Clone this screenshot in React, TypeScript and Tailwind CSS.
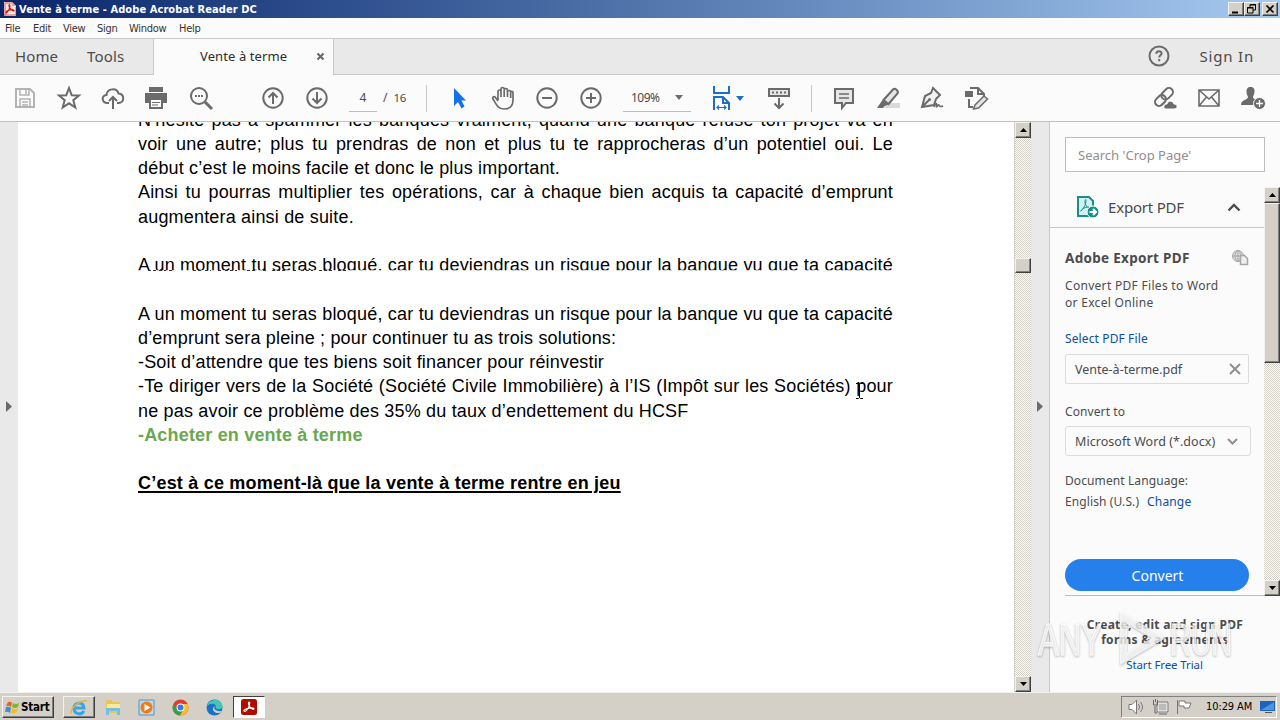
import type { ReactNode } from 'react';
import clsx from 'clsx';

const menus = [
  { label: 'File', width: 'w-[28px]' },
  { label: 'Edit', width: 'w-[30px]' },
  { label: 'View', width: 'w-[34px]' },
  { label: 'Sign', width: 'w-[32px]' },
  { label: 'Window', width: 'w-[50px]' },
  { label: 'Help', width: 'w-[30px]' },
];

type Line = { text: string; justify?: boolean; style?: string };

const lines: Line[] = [
  { text: 'N’hésite pas à spammer les banques vraiment, quand une banque refuse ton projet va en', justify: true },
  { text: 'voir une autre; plus tu prendras de non et plus tu te rapprocheras d’un potentiel oui. Le', justify: true },
  { text: 'début c’est le moins facile et donc le plus important.' },
  { text: 'Ainsi tu pourras multiplier tes opérations, car à chaque bien acquis ta capacité d’emprunt', justify: true },
  { text: 'augmentera ainsi de suite.' },
  { text: '' },
  { text: 'A un moment tu seras bloqué, car tu deviendras un risque pour la banque vu que ta capacité', justify: true, style: '[clip-path:inset(0_0_7px_0)]' },
  { text: '' },
  { text: 'A un moment tu seras bloqué, car tu deviendras un risque pour la banque vu que ta capacité', justify: true },
  { text: 'd’emprunt sera pleine ; pour continuer tu as trois solutions:' },
  { text: '-Soit d’attendre que tes biens soit financer pour réinvestir' },
  { text: '-Te diriger vers de la Société (Société Civile Immobilière) à l’IS (Impôt sur les Sociétés) pour', justify: true },
  { text: 'ne pas avoir ce problème des 35% du taux d’endettement du HCSF' },
  { text: '-Acheter en vente à terme', style: 'font-bold text-[#6aa84f]' },
  { text: '' },
  { text: 'C’est à ce moment-là que la vente à terme rentre en jeu', style: 'font-bold underline decoration-2 underline-offset-2 tracking-[0.21px]' },
];

const raised = 'border border-t-[#f4f2ee] border-l-[#f4f2ee] border-r-[#404040] border-b-[#404040] bg-[#d4d0c8] shadow-[inset_-1px_-1px_0_#808080]';
const dither = 'bg-[repeating-conic-gradient(#d4d0c8_0_25%,#ffffff_0_50%)] bg-[length:2px_2px]';

function Cell({ children, className }: { children: ReactNode; className?: string }) {
  return (
    <button className={clsx('flex h-full shrink-0 items-center justify-center', className ?? 'w-11')}>
      <svg width="26" height="26" viewBox="0 0 26 26" fill="none" stroke="#6b6b6b" strokeWidth="2">{children}</svg>
    </button>
  );
}

function AcrobatMark({ size }: { size: number }) {
  return (
    <svg width={size} height={size} viewBox="0 0 16 16">
      <rect width="16" height="16" rx="2.5" fill="#b30b00" />
      <path d="M3 12.2c-.9-1 1.8-2.6 5.2-3.1 3-.5 5-.1 4.8.8-.3 1.1-3.4-.6-4.8-3C7.300 5.200 7.200 3 8.100 3c1 0 .7 2.400-.4 5.100C6.500 10.900 4 13.300 3 12.200z" fill="none" stroke="#fff" strokeWidth="1.1" />
    </svg>
  );
}

function Arrow({ down }: { down?: boolean }) {
  return (
    <div className={clsx('flex h-4 w-full shrink-0 items-center justify-center', raised)}>
      <svg width="7" height="4" viewBox="0 0 7 4">
        <path d={down ? 'M0 0h7L3.500 4z' : 'M0 4h7L3.500 0z'} fill="#000" />
      </svg>
    </div>
  );
}

function TitleBar() {
  return (
    <div className="flex h-[18px] shrink-0 items-center bg-linear-to-r from-[#0a246a] to-[#a6caf0] pl-1 pr-0.5">
      <svg width="12" height="14" viewBox="0 0 12 14">
        <path d="M0 0h8l4 4v10H0z" fill="#f7e9e7" />
        <path d="M1 14V1h7M0 13h12V5" fill="none" stroke="#e0554d" strokeWidth="1" />
        <path d="M8 0v4h4" fill="#e5a29d" />
        <path d="M2 10c1-2 7-3 8-1.500S5 7 5 4s2 0 0 3.500S1.500 11.500 2 10z" fill="none" stroke="#d7190f" strokeWidth="1.300" />
      </svg>
      <span className="ml-[3px] whitespace-nowrap font-['DejaVu_Sans_Condensed','DejaVu_Sans',sans-serif] text-[11px] font-bold leading-none tracking-[0.08px] text-white">
        Vente à terme - Adobe Acrobat Reader DC
      </span>
      <div className="ml-auto flex">
        <div className={clsx('h-[14px] w-4', raised)}>
          <svg width="14" height="12"><path d="M3 9.500h6" stroke="#000" strokeWidth="2" /></svg>
        </div>
        <div className={clsx('h-[14px] w-4', raised)}>
          <svg width="14" height="12" fill="none" stroke="#000"><path d="M5 4V1.500h5.500V7H8M5 2h6M2.500 4.500H8V10H2.500zM2 5h6" /></svg>
        </div>
        <div className={clsx('ml-0.5 h-[14px] w-4', raised)}>
          <svg width="14" height="12"><path d="M3.500 2.500l7 7m0-7l-7 7" stroke="#000" strokeWidth="1.700" /></svg>
        </div>
      </div>
    </div>
  );
}

function Tabs() {
  return (
    <div className="flex h-[37px] shrink-0 border-t border-[#c8c8c8] bg-[#e9e9e9] text-[#4b4b4b]">
      <div className="flex w-[154px] items-center border-r border-b border-[#c8c8c8] pl-[15px] text-[15px]">
        <span className="w-[72px] tracking-[0.1px]">Home</span>
        <span className="tracking-[0.2px]">Tools</span>
      </div>
      <div className="flex w-[179px] items-center bg-[#fbfbfb] pl-[46px] text-[13px] text-[#2d2d2d]">
        <span className="w-[116px] whitespace-nowrap tracking-[0.1px]">Vente à terme</span>
        <svg className="mb-px" width="9" height="9" viewBox="0 0 9 9"><path d="M1.500 1.500l6 6m0-6l-6 6" stroke="#666" strokeWidth="2" /></svg>
      </div>
      <div className="flex flex-1 items-center justify-end border-b border-l border-[#c8c8c8] pr-[26px] pb-px">
        <svg className="mr-[30px]" width="22" height="22" viewBox="0 0 22 22" fill="none" stroke="#6b6b6b" strokeWidth="2">
          <circle cx="11" cy="11" r="9.500" />
          <path d="M8.300 8.700c0-3.400 5.500-3.200 5.300-.3-.1 1.800-2.400 1.900-2.400 4M11.200 14v2.200" />
        </svg>
        <span className="text-[15px] tracking-[0.8px]">Sign In</span>
      </div>
    </div>
  );
}

function Toolbar() {
  return (
    <div className="flex h-[47px] shrink-0 items-center border-b border-[#c0c0c0] bg-[#fbfbfb] pl-[3px] pr-[5px] text-[12px] text-[#4b4b4b]">
      <Cell>
        <g stroke="#b3b3b3"><path d="M4 4h14l4 4v14H4z" /><path d="M8 4v6h9V4M14 5v4M8 22v-8h10v8M10 17h6m-6 3h6" strokeWidth="1.500" /></g>
      </Cell>
      <Cell><path d="M13 3l2.700 7.200 7.300.3-5.700 4.700 2 7.300L13 18.300l-6.300 4.200 2-7.300L3 10.500l7.300-.3z" /></Cell>
      <Cell><path d="M9 18H7.500C1.500 18 1 10.500 6.500 10c.5-7 10.500-7.500 12-1.500 6.500.5 6 9.500 0 9.500H17M13 24V12m-4 4l4-4 4 4" /></Cell>
      <Cell>
        <path d="M5 2h14v5H5z" fill="#6b6b6b" stroke="none" />
        <path d="M1 8h22v10h-4v-4H5v4H1z" fill="#6b6b6b" stroke="none" />
        <path d="M6 14h12v9H6z" fill="#fbfbfb" /><path d="M8 17.500h8m-8 2.500h6" strokeWidth="1" /><path d="M4 7.500h16" stroke="#fbfbfb" strokeWidth="1" />
      </Cell>
      <Cell><circle cx="11" cy="11" r="8" /><path d="M17 17l7 7" strokeWidth="3" /><path d="M7 11h2m1 0h2m1 0h2" /></Cell>
      <div className="w-7" />
      <Cell><circle cx="13" cy="13" r="9.700" /><path d="M13 19V8m-4.500 4.500L13 8l4.500 4.500" /></Cell>
      <Cell><circle cx="13" cy="13" r="9.700" /><path d="M13 7v11m-4.500-4.500L13 18l4.500-4.500" /></Cell>
      <div className="ml-2.5 flex h-[27px] w-7 items-center justify-center border-b border-[#bdbdbd]">4</div>
      <span className="ml-[6px] w-[43px] whitespace-nowrap">/ <span className="ml-[3px] text-[11.500px] tracking-[-0.4px]">16</span></span>
      <div className="h-[27px] w-px bg-[#c8c8c8]" />
      <div className="w-[10px]" />
      <Cell><path d="M8 3v18l4-4 3.500 6.500 3-2-3-6H20z" fill="#1473e6" stroke="none" /></Cell>
      <Cell>
        <path d="M8 15V6.500c0-2 3-2 3 0V12m0-6V4c0-2 3.200-2 3.200 0v8m0-7c0-2 3.300-2 3.300 0v7m0-5c0-2 3.200-2 3.200 0v0M8 16l-2.500-3.500c-1.300-1.700-3.500-.2-2.500 1.500C6 19 8 24 14 24c6.500 0 9-3.500 9-9V7.500c0-1.500-2.300-1.500-2.300 0V13" strokeWidth="1.700" />
      </Cell>
      <Cell><circle cx="13" cy="13" r="9.700" /><path d="M8 13h10" /></Cell>
      <Cell><circle cx="13" cy="13" r="9.700" /><path d="M8 13h10M13 8v10" /></Cell>
      <div className="ml-[10px] flex h-[27px] w-[68px] shrink-0 items-center justify-between border-b border-[#bdbdbd] px-2">
        <span className="tracking-[-0.5px]">109%</span>
        <svg width="8" height="5"><path d="M0 0h8L4 5z" fill="#6b6b6b" /></svg>
      </div>
      <Cell className="ml-[19px] w-[26px]">
        <path d="M4 1v7h15V1M4 25V12h9l6 6v7M13 12v6h6" stroke="#1b6fc4" />
        <path d="M7 22.500h9m-7-2l-2 2 2 2m5-4l2 2-2 2" stroke="#1b6fc4" strokeWidth="1.200" />
      </Cell>
      <svg width="8" height="5" className="shrink-0"><path d="M0 0h8L4 5z" fill="#1b6fc4" /></svg>
      <Cell className="ml-[13px] w-11">
        <path d="M3 4h20v7H3z" fill="#e6e6e6" /><path d="M13 13v10m-4.500-4.500L13 23l4.500-4.500" /><path d="M6 7.500h14" strokeDasharray="2 2" />
      </Cell>
      <div className="ml-[10px] h-[27px] w-px bg-[#c8c8c8]" />
      <div className="w-[10px]" />
      <Cell><path d="M4 4h18v14h-7l-4 5v-5H4z" fill="#e6e6e6" /><path d="M8 9h10m-10 4h10" strokeWidth="1.500" /></Cell>
      <Cell>
        <path d="M11 18h14v5H9z" fill="#d9d9d9" stroke="none" />
        <path d="M8.500 15L18 4.500c2-2 6 1.500 4.500 4L13.500 19z" fill="#e6e6e6" /><path d="M7.500 15l6 4.500-4 1.500L8 23H2z" fill="#6b6b6b" stroke="none" />
      </Cell>
      <Cell>
        <path d="M14 3l7 7-4 4-2 6L3 22l3-11 6-3zM3.500 21.500L10 15" fill="#f1f1f1" /><circle cx="10.500" cy="14.500" r="1.500" fill="#6b6b6b" stroke="none" />
        <path d="M15 22c2-5 3-4 2.500-1s2-2.500 2.500-1 1.500 2 4 1" strokeWidth="1.600" />
      </Cell>
      <Cell>
        <path d="M7 3h8l6 6v3M15 3v6h6M6 14v8h4" /><path d="M2 6h8v6H2z" fill="#6b6b6b" stroke="none" /><path d="M12 20l9-9 3.500 3-9 9-5 1z" fill="#e6e6e6" strokeWidth="1.500" />
      </Cell>
      <div className="flex-1" />
      <Cell>
        <g transform="translate(1 0) rotate(-45 11 12)"><rect x="0" y="8" width="12" height="8" rx="4" /><rect x="9" y="8" width="13" height="8" rx="4" /></g>
        <path d="M14 24c-3 0-3-5 1-5 1-4 6-3.500 7 0 4 0 4 5 0 5z" fill="#6b6b6b" stroke="#fbfbfb" strokeWidth="1" />
      </Cell>
      <Cell><path d="M3 5h20v16H3zM3 5l10 9L23 5M3 21l7.500-9M23 21l-7.500-9" strokeWidth="1.600" /></Cell>
      <Cell>
        <path d="M10.500 2c3 0 4.500 2 4 5-.2 3-1.500 3.500-1.500 5.500 0 1.500 5 2 6 5L16 20H1c0-5 6-5 7-7.500 0-2-1.500-2.500-1.500-5.500 0-3 1-5 4-5z" fill="#6b6b6b" stroke="none" />
        <circle cx="19.500" cy="18.500" r="6" fill="#6b6b6b" stroke="#fbfbfb" strokeWidth="1" /><path d="M16 18.500h7M19.500 15v7" stroke="#fff" strokeWidth="1.300" />
      </Cell>
    </div>
  );
}

function Document() {
  return (
    <div className="relative min-w-0 flex-1 overflow-hidden bg-white pl-[120px]">
      <div className="-mt-[14.500px] w-[755px] font-['Liberation_Sans',Arial,sans-serif] text-[18px] leading-[24.270px] tracking-[0.18px] text-black">
        {lines.map((line, i) => (
          <p key={i} className={clsx('h-[24.270px]', line.justify ? '[text-align-last:justify]' : 'whitespace-nowrap', line.style)}>
            {line.text}
          </p>
        ))}
      </div>
      {/* leftovers of the half-painted line */}
      <svg className="absolute left-[120px] top-[147px]" width="240" height="4">
        <path d="M10 1.500h8m3 0h7m3 0h3m21 0h9m3 0h6m7 0h4m3 0h12m10 0h8m8 0h5m4 0h14m7 0h3m5 0h12m6 0h14m5 0h9" stroke="#333" strokeDasharray="3 2" />
      </svg>
      {/* text cursor */}
      <svg className="absolute left-[838px] top-[261px]" width="7" height="16" fill="none" stroke="#000">
        <path d="M0 .5h2.500l1 1 1-1H7M3.500 1v14M0 15.500h2.500l1-1 1 1H7" />
      </svg>
    </div>
  );
}

function ExportPanel() {
  return (
    <div className="flex w-[231px] shrink-0 flex-col border-l border-[#c8c8c8] bg-[#fbfbfb] text-[12px] text-[#4b4b4b]">
      <div className="ml-[15px] mt-[15px] flex h-[35px] w-[200px] shrink-0 items-center border border-[#bdbdbd] bg-white pl-3 pt-0.5 text-[13px] text-[#8e8e8e]">
        Search 'Crop Page'
      </div>
      <div className="mt-[15px] flex h-[409px] shrink-0">
        <div className="flex w-[214px] flex-col">
          <div className="flex h-[41px] shrink-0 items-center border-b border-[#c8c8c8] pl-[26px] pr-[23px]">
            <svg width="24" height="24" viewBox="0 0 24 24" fill="none" stroke="#168f89" strokeWidth="2">
              <path d="M2 2h11l4 4v15H2z" fill="#d5f1ef" />
              <path d="M5 16c2-4 9-5 9-3S8 10 9 6s2 1-1 6-4 4-3 4" strokeWidth="1" />
              <circle cx="17" cy="17" r="6" fill="#168f89" stroke="#fbfbfb" strokeWidth="1" />
              <path d="M13.500 17h6m-2.500-3l3 3-3 3" stroke="#fff" />
            </svg>
            <span className="ml-2 text-[15px] tracking-[-0.2px]">Export PDF</span>
            <svg className="ml-auto" width="14" height="9" viewBox="0 0 14 9"><path d="M1.500 7.500L7 2l5.500 5.500" fill="none" stroke="#4b4b4b" strokeWidth="2.400" /></svg>
          </div>
          <div className="flex flex-1 flex-col pl-[15px] pr-[15px]">
            <div className="mt-[20px] flex h-5 items-center justify-between">
              <span className="whitespace-nowrap pt-px text-[13.500px] font-bold tracking-[0.3px]">Adobe Export PDF</span>
              <svg width="17" height="16" viewBox="0 0 17 16" fill="none" stroke="#a6a6a6">
                <circle cx="6" cy="6" r="5.500" fill="#ddd" /><path d="M1 6h10M6 0v12M6 0C2 4 2 8 6 12M6 0c4 4 4 8 0 12" />
                <path d="M8.500 5.500h4l3 3v6h-7z" fill="#eee" strokeWidth="1.500" />
              </svg>
            </div>
            <p className="mt-[9px] whitespace-nowrap leading-[17px] tracking-[0.3px]">Convert PDF Files to Word<br />or Excel Online</p>
            <a className="mt-[19px] leading-[17px] tracking-[0.12px] text-[#0d4f9e]">Select PDF File</a>
            <div className="mt-[7px] flex h-[30px] w-[184px] items-center justify-between rounded-xs border border-[#dcdcdc] pl-[9px] pr-[7px] text-[12.500px]">
              <span className="pt-0.5">Vente-à-terme.pdf</span>
              <svg width="12" height="12"><path d="M1 1l10 10m0-10L1 11" stroke="#8e8e8e" strokeWidth="2" /></svg>
            </div>
            <span className="mt-[19px] leading-[17px] tracking-[0.1px]">Convert to</span>
            <div className="mt-[6px] flex h-[30px] w-[186px] items-center justify-between whitespace-nowrap rounded-[3px] border border-[#dcdcdc] pl-[9px] pr-3 text-[12.500px] tracking-[0.05px]">
              <span className="pt-0.5">Microsoft Word (*.docx)</span>
              <svg width="11" height="7"><path d="M1 1l4.500 4.500L10 1" fill="none" stroke="#8e8e8e" strokeWidth="2" /></svg>
            </div>
            <p className="mt-[14px] leading-[21px] tracking-[0.1px]">Document Language:<br />English (U.S.)<span className="ml-[8px] tracking-[0.15px] text-[#0d4f9e]">Change</span></p>
            <button className="mt-auto mb-1 h-8 w-[184px] shrink-0 rounded-full bg-[#2680eb] pl-px text-[14px] text-white">Convert</button>
            <div className="h-px w-[199px] shrink-0 bg-[#bdbdbd]" />
          </div>
        </div>
        <div className={clsx('flex w-4 flex-col', dither)}>
          <Arrow />
          <div className={clsx('h-[160px]', raised)} />
          <div className="flex-1" />
          <Arrow down />
        </div>
      </div>
      <div className="relative flex flex-1 flex-col items-center pt-[21px]">
        <p className="whitespace-nowrap text-center text-[12px] font-bold leading-[15px] tracking-[0.28px]">Create, edit and sign PDF<br />forms &amp; agreements</p>
        <a className="mt-[10px] pr-px text-[11.500px] leading-[16px] tracking-[-0.1px] text-[#0d4f9e]">Start Free Trial</a>
        <svg className="absolute -left-[14px] top-[12px] drop-shadow-[0_1px_1px_#00000055]" width="202" height="64" viewBox="0 0 202 64">
          <g fill="#fff" fillOpacity=".7" stroke="#fff" strokeOpacity=".7" strokeWidth="1.5" fontFamily="Liberation Sans Narrow, Liberation Sans" fontSize="45">
            <text x="2" y="47" textLength="64" lengthAdjust="spacingAndGlyphs">ANY</text>
            <text x="134" y="47" textLength="62" lengthAdjust="spacingAndGlyphs">RUN</text>
          </g>
          <path d="M84 3v54l46-27zM91 16v28l25-14z" fill="#fff" fillOpacity=".75" fillRule="evenodd" />
        </svg>
      </div>
    </div>
  );
}

function Taskbar() {
  return (
    <div className="flex h-7 shrink-0 items-center border-t border-[#f4f2ee] bg-[#d4d0c8] pl-0.5 pr-[3px] pt-px font-['DejaVu_Sans_Condensed','DejaVu_Sans',sans-serif] text-black">
      <div className={clsx('flex h-[22px] w-[52px] items-center pl-0.5', raised)}>
        <svg width="15" height="15" viewBox="0 0 15 15">
          <path d="M3 2q3-1 4 1L6 7Q4 5 1 6z" fill="#e8632b" /><path d="M8 3q3 2 6 0l-1 4q-3 2-6 0z" fill="#7fb72e" />
          <path d="M1 7q3-1 5 1l-1 5q-2-2-5-1z" fill="#3b8fd4" /><path d="M7 8q3 2 6 0l-1 4q-3 2-6 1z" fill="#f6bd25" />
        </svg>
        <span className="ml-px pt-px text-[11.500px] font-bold tracking-[-0.2px]">Start</span>
      </div>
      <div className={clsx('ml-[9px] flex h-[22px] w-8 items-center justify-center', raised)}>
        <svg width="18" height="17" viewBox="0 0 18 17" fill="none">
          <path d="M14 12c-3 5-10 3-10-3s9-7 10 0H5" stroke="#3aa5e6" strokeWidth="3" /><path d="M1 15C0 9 11 0 17 2" stroke="#edb52e" strokeWidth="1.500" />
        </svg>
      </div>
      <svg className="ml-[9px]" width="18" height="18" viewBox="0 0 18 18">
        <path d="M2 2h6l1 2h7v11H2z" fill="#e9c65c" /><path d="M3 6h13v5H3z" fill="#fbe99b" /><path d="M2 17v-7h14v7h-3v-4H5v4z" fill="#75bfe3" />
      </svg>
      <svg className="ml-[16px]" width="17" height="17" viewBox="0 0 17 17">
        <path d="M1 1h15v15H1z" fill="#b8dbee" stroke="#5797be" /><circle cx="8.500" cy="8.500" r="6" fill="#f37b16" /><path d="M6.500 5v7l6-3.500z" fill="#fff" />
      </svg>
      <svg className="ml-[17px]" width="17" height="17" viewBox="0 0 17 17">
        <circle cx="8.500" cy="8.500" r="8" fill="#e33b2e" /><path d="M1.500 5A8 8 0 0 0 8 16.500l3.500-6.500H5z" fill="#2da34e" /><path d="M8 16.500A8 8 0 0 0 15.500 5H8l4 5z" fill="#fcc31e" />
        <circle cx="8.500" cy="8.500" r="4" fill="#fff" /><circle cx="8.500" cy="8.500" r="3" fill="#3979e8" />
      </svg>
      <svg className="ml-[17px]" width="17" height="17" viewBox="0 0 17 17">
        <circle cx="8.500" cy="8.500" r="8" fill="#1673c7" /><path d="M1 7C3-1 16-1 16.500 7c0 4-5 4-7 2 2-4-4-6-8.500-2z" fill="#43c6b3" /><path d="M9 7c-2 2 0 6 7 5l-2 2c-7 1-9-5-5-7z" fill="#d4d0c8" />
      </svg>
      <div className="ml-[10px] flex h-[22px] w-8 items-center justify-center border border-t-[#404040] border-l-[#404040] border-r-white border-b-white bg-white">
        <AcrobatMark size={16} />
      </div>
      <div className="ml-auto flex h-[22px] w-[156px] items-center border border-t-[#808080] border-l-[#808080] border-r-white border-b-white pl-[6px]">
        <svg width="17" height="16" viewBox="0 0 17 16" fill="none" stroke="#777">
          <path d="M1 5.500h3L8.500 1v14L4 10.500H1z" fill="#fff" /><path d="M10.500 5q2 3 0 6M12.500 3q4 5 0 10" />
        </svg>
        <svg className="ml-[7px]" width="17" height="16" viewBox="0 0 17 16" fill="none" stroke="#666">
          <path d="M5.500 3.500h10v9h-10z" fill="#bbb" stroke="#fff" strokeWidth="2" /><path d="M5 3h11v10H5zM7 15h8M3 7v7h2M1.500 1v5h4V1M3.500 0v3" />
        </svg>
        <svg className="ml-[7px]" width="17" height="16" viewBox="0 0 17 16" stroke="#777"><path d="M1.500 1v14M3 2h6v2h6l-2 5H8V7H3z" fill="#fff" /></svg>
        <span className="ml-[13px] w-[53px] whitespace-nowrap pt-px text-[11px] tracking-[-0.1px]">10:29 AM</span>
        <svg className="ml-px shrink-0" width="15" height="14"><path d="M0 1h15v10H0z" fill="#1d62bd" /><path d="M1 10L14 2v8z" fill="#4b94df" /><path d="M5 12.500h7" stroke="#555" /></svg>
      </div>
    </div>
  );
}

export default function App() {
  return (
    <div className="flex h-[720px] w-[1280px] flex-col overflow-hidden bg-[#fbfbfb] font-['Noto_Sans',sans-serif]">
      <TitleBar />
      <div className="flex h-5 shrink-0 items-center pl-[5px] pt-0.5 font-['DejaVu_Sans_Condensed','DejaVu_Sans',sans-serif] text-[11px] tracking-[-0.3px] text-[#333]">
        {menus.map((m) => (
          <span key={m.label} className={m.width}>{m.label}</span>
        ))}
      </div>
      <Tabs />
      <Toolbar />
      <div className="flex min-h-0 flex-1">
        <div className="flex w-[18px] shrink-0 items-center justify-center bg-[#e9e9e9] pb-px">
          <svg width="6" height="11"><path d="M0 0v11l6-5.500z" fill="#6b6b6b" /></svg>
        </div>
        <Document />
        <div className={clsx('flex w-[17px] shrink-0 flex-col border-l border-[#d4d0c8]', dither)}>
          <Arrow />
          <div className={clsx('mt-[120px] h-[15px]', raised)} />
          <div className="flex-1" />
          <Arrow down />
        </div>
        <div className="flex w-[18px] shrink-0 items-center justify-center bg-[#e9e9e9] pb-px">
          <svg width="6" height="11"><path d="M0 0v11l6-5.500z" fill="#6b6b6b" /></svg>
        </div>
        <ExportPanel />
      </div>
      <Taskbar />
    </div>
  );
}
